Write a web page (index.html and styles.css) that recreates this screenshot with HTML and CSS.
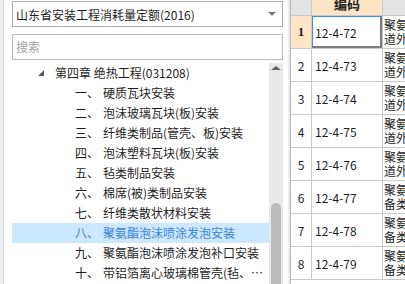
FILE: index.html
```html
<!DOCTYPE html>
<html lang="zh-CN">
<head>
    <meta charset="UTF-8">
    <title>定额库</title>
    <link rel="stylesheet" href="styles.css">
</head>
<body>
    <div class="app">
        <div class="side">
            <div class="combo">
                <span>山东省安装工程消耗量定额(2016)</span>
                <span class="caret"></span>
            </div>
            <div class="search">搜索</div>
            <div class="tree-wrap">
                <ul class="tree">
                    <li class="node"><span class="arrow"></span>第四章 绝热工程(031208)</li>
                    <li class="leaf"><span class="num">一、</span>硬质瓦块安装</li>
                    <li class="leaf"><span class="num">二、</span>泡沫玻璃瓦块(板)安装</li>
                    <li class="leaf"><span class="num">三、</span>纤维类制品(管壳、板)安装</li>
                    <li class="leaf"><span class="num">四、</span>泡沫塑料瓦块(板)安装</li>
                    <li class="leaf"><span class="num">五、</span>毡类制品安装</li>
                    <li class="leaf"><span class="num">六、</span>棉席(被)类制品安装</li>
                    <li class="leaf"><span class="num">七、</span>纤维类散状材料安装</li>
                    <li class="leaf active"><span class="num">八、</span>聚氨酯泡沫喷涂发泡安装</li>
                    <li class="leaf"><span class="num">九、</span>聚氨酯泡沫喷涂发泡补口安装</li>
                    <li class="leaf"><span class="num">十、</span><span class="txt">带铝箔离心玻璃棉管壳(毡、板)安装</span></li>
                </ul>
                <div class="vscroll">
                    <span class="up"></span>
                    <div class="thumb"></div>
                </div>
            </div>
        </div>
        <div class="divider"></div>
        <div class="grid-wrap">
            <table class="grid">
                <tr class="head">
                    <th class="corner"></th>
                    <th class="cur">编码</th>
                    <th class="wide"></th>
                </tr>
                <tr>
                    <td class="rh cur">1</td>
                    <td class="code sel">12-4-72</td>
                    <td class="name"><div>聚氨酯泡沫喷涂发泡 管</div><div>道外径(mm以内) 57</div></td>
                </tr>
                <tr>
                    <td class="rh">2</td>
                    <td class="code">12-4-73</td>
                    <td class="name"><div>聚氨酯泡沫喷涂发泡 管</div><div>道外径(mm以内) 133</div></td>
                </tr>
                <tr>
                    <td class="rh">3</td>
                    <td class="code">12-4-74</td>
                    <td class="name"><div>聚氨酯泡沫喷涂发泡 管</div><div>道外径(mm以内) 325</div></td>
                </tr>
                <tr>
                    <td class="rh">4</td>
                    <td class="code">12-4-75</td>
                    <td class="name"><div>聚氨酯泡沫喷涂发泡 管</div><div>道外径(mm以内) 529</div></td>
                </tr>
                <tr>
                    <td class="rh">5</td>
                    <td class="code">12-4-76</td>
                    <td class="name"><div>聚氨酯泡沫喷涂发泡 管</div><div>道外径(mm以外) 529</div></td>
                </tr>
                <tr>
                    <td class="rh">6</td>
                    <td class="code">12-4-77</td>
                    <td class="name"><div>聚氨酯泡沫喷涂发泡 设</div><div>备类 立式</div></td>
                </tr>
                <tr>
                    <td class="rh">7</td>
                    <td class="code">12-4-78</td>
                    <td class="name"><div>聚氨酯泡沫喷涂发泡 设</div><div>备类 卧式</div></td>
                </tr>
                <tr>
                    <td class="rh">8</td>
                    <td class="code">12-4-79</td>
                    <td class="name"><div>聚氨酯泡沫喷涂发泡 设</div><div>备类 球形</div></td>
                </tr>
            </table>
        </div>
    </div>
</body>
</html>
```

FILE: styles.css
```css
html, body {
    margin: 0;
    padding: 0;
    height: 284px;
    overflow: hidden;
}
body {
    font-family: "Noto Sans CJK SC", "Noto Sans", sans-serif;
    font-size: 12px;
    color: #1e1e1e;
    background: #fff;
}
.app {
    display: flex;
    height: 284px;
    overflow: hidden;
    padding-left: 3px;
    background: #efefef;
}
.side {
    width: 271px;
    flex: none;
    padding: 1px 5px 0 8px;
    border-left: 1px solid #d2d2d2;
    background: #fff;
    overflow: hidden;
}
.combo {
    display: flex;
    align-items: center;
    justify-content: space-between;
    height: 26px;
    box-sizing: border-box;
    border: 1px solid #acacac;
    padding: 0 6px 0 3px;
}
.caret {
    width: 0;
    height: 0;
    border-left: 4px solid transparent;
    border-right: 4px solid transparent;
    border-top: 4px solid #7d7d7d;
}
.search {
    height: 26px;
    box-sizing: border-box;
    margin-top: 7px;
    border: 1px solid #b9b9b9;
    padding-left: 3px;
    line-height: 24px;
    color: #a3a3a3;
}
.tree-wrap {
    display: flex;
    margin-top: 3px;
    height: 221px;
    overflow: hidden;
}
.tree {
    flex: 1;
    min-width: 0;
    list-style: none;
    margin: 0;
    padding: 0;
}
.tree li {
    height: 20px;
    line-height: 20px;
    white-space: nowrap;
    display: flex;
    align-items: center;
}
.node {
    padding-left: 26px;
}
.arrow {
    width: 0;
    height: 0;
    border-left: 6px solid transparent;
    border-bottom: 6px solid #5a5a5a;
    margin-right: 11px;
}
.leaf {
    padding-left: 63px;
}
.num {
    width: 28px;
    flex: none;
}
.txt {
    overflow: hidden;
    text-overflow: ellipsis;
    padding-right: 4px;
}
.active {
    background: #cce8ff;
    color: #3b82d6;
}
.vscroll {
    width: 14px;
    flex: none;
    background: #e8e8e8;
    overflow: hidden;
}
.up {
    display: block;
    width: 0;
    height: 0;
    margin: 3px auto 0;
    border-left: 5px solid transparent;
    border-right: 5px solid transparent;
    border-bottom: 4px solid #666;
}
.thumb {
    width: 10px;
    height: 90px;
    margin: 133px auto 0;
    border-radius: 5px;
    background: #bcbcbc;
}
.divider {
    width: 2px;
    flex: none;
    background: #ececec;
    border-right: 1px solid #b7b7b7;
}
.grid-wrap {
    flex: 1;
    overflow: hidden;
    background: #fff;
}
.grid {
    border-collapse: separate;
    border-spacing: 0;
    table-layout: fixed;
    width: 300px;
    margin-top: -8px;
}
.grid th, .grid td {
    padding: 0;
    border-right: 1px solid #c9c9c9;
    border-bottom: 1px solid #c9c9c9;
    overflow: hidden;
    white-space: nowrap;
}
.head th {
    height: 23px;
    background: #e4e4e4;
    font-size: 13px;
    font-weight: bold;
    color: #222;
}
.corner {
    width: 20px;
    border-right-color: #b5b5b5;
}
.head .cur {
    width: 70px;
    background: #fde5c6;
}
.wide {
    width: 208px;
}
.grid td {
    height: 32px;
}
.rh {
    text-align: center;
}
td.cur {
    background: #fde5c6;
    font-weight: bold;
    font-family: "Liberation Serif", serif;
    font-size: 13px;
}
.code {
    padding-left: 3px !important;
}
.sel {
    box-shadow: inset 1px 1px 0 #3a8fe8, inset -2px -2px 0 #7c7c7c;
}
.name {
    padding-left: 1px !important;
    line-height: 14px;
}
```
